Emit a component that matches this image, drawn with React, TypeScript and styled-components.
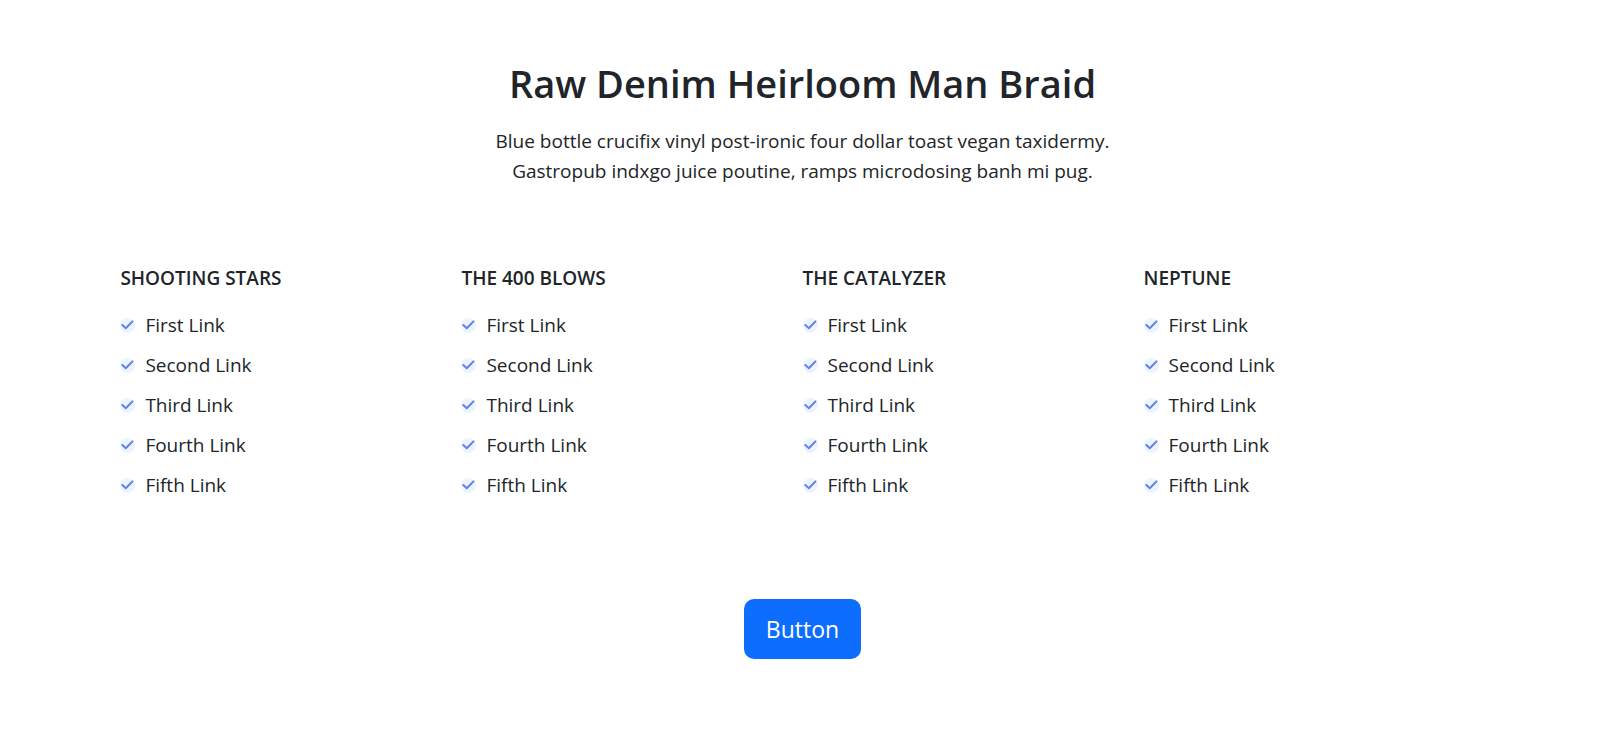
import React from "react";
import styled, { createGlobalStyle } from "styled-components";

const GlobalStyle = createGlobalStyle`
  *, *::before, *::after { box-sizing: border-box; }
  body {
    margin: 0;
    background: #fff;
    color: #212529;
    font-family: "Segoe UI", "Open Sans", "Noto Sans", sans-serif;
    font-size: 19px;
    line-height: 30px;
  }
`;

const Section = styled.section`
  width: 85%;
  margin: 0 auto;
  padding: 59px 0 78px;
`;

const Intro = styled.header`
  text-align: center;
`;

const Title = styled.h1`
  margin: 0 0 19px;
  font-size: 38px;
  font-weight: 600;
  line-height: 48px;
`;

const Lead = styled.p`
  max-width: 640px;
  margin: 0 auto;
`;

const Columns = styled.div`
  display: grid;
  grid-template-columns: repeat(4, 1fr);
  margin-top: 77px;
`;

const ColumnTitle = styled.h2`
  margin: 0 0 12px;
  font-size: 19px;
  font-weight: 600;
  line-height: 30px;
  text-transform: uppercase;
`;

const LinkList = styled.ul`
  margin: 0;
  padding: 0;
  list-style: none;
`;

const LinkItem = styled.li`
  display: flex;
  align-items: center;
  gap: 10px;
  height: 40px;
`;

const ItemLink = styled.a`
  color: inherit;
  text-decoration: none;
`;

const Badge = styled.span`
  display: flex;
  align-items: center;
  justify-content: center;
  width: 15px;
  height: 15px;
  border-radius: 50%;
  background: #ebf4ff;
  color: #667eea;
`;

const Action = styled.div`
  display: flex;
  justify-content: center;
  margin-top: 94px;
`;

const Button = styled.button`
  padding: 10px 22px;
  border: 0;
  border-radius: 10px;
  background: #0d6efd;
  color: #fff;
  font: inherit;
  font-size: 23px;
  line-height: 40px;
  cursor: pointer;
`;

const Check = () => (
  <svg width="15" height="15" viewBox="0 0 15 15" fill="none" stroke="currentColor" strokeWidth="2" strokeLinecap="round" strokeLinejoin="round" aria-hidden="true">
    <path d="M2.3 7 L5.8 10.2 L12.5 3.4" />
  </svg>
);

const groups = ["Shooting Stars", "The 400 Blows", "The Catalyzer", "Neptune"];
const links = ["First Link", "Second Link", "Third Link", "Fourth Link", "Fifth Link"];

export default function App() {
  return (
    <>
      <GlobalStyle />
      <Section>
        <Intro>
          <Title>Raw Denim Heirloom Man Braid</Title>
          <Lead>
            Blue bottle crucifix vinyl post-ironic four dollar toast vegan taxidermy.
            <br />
            Gastropub indxgo juice poutine, ramps microdosing banh mi pug.
          </Lead>
        </Intro>
        <Columns>
          {groups.map((group) => (
            <nav key={group} aria-label={group}>
              <ColumnTitle>{group}</ColumnTitle>
              <LinkList>
                {links.map((link) => (
                  <LinkItem key={link}>
                    <Badge><Check /></Badge>
                    <ItemLink href="#">{link}</ItemLink>
                  </LinkItem>
                ))}
              </LinkList>
            </nav>
          ))}
        </Columns>
        <Action>
          <Button type="button">Button</Button>
        </Action>
      </Section>
    </>
  );
}
